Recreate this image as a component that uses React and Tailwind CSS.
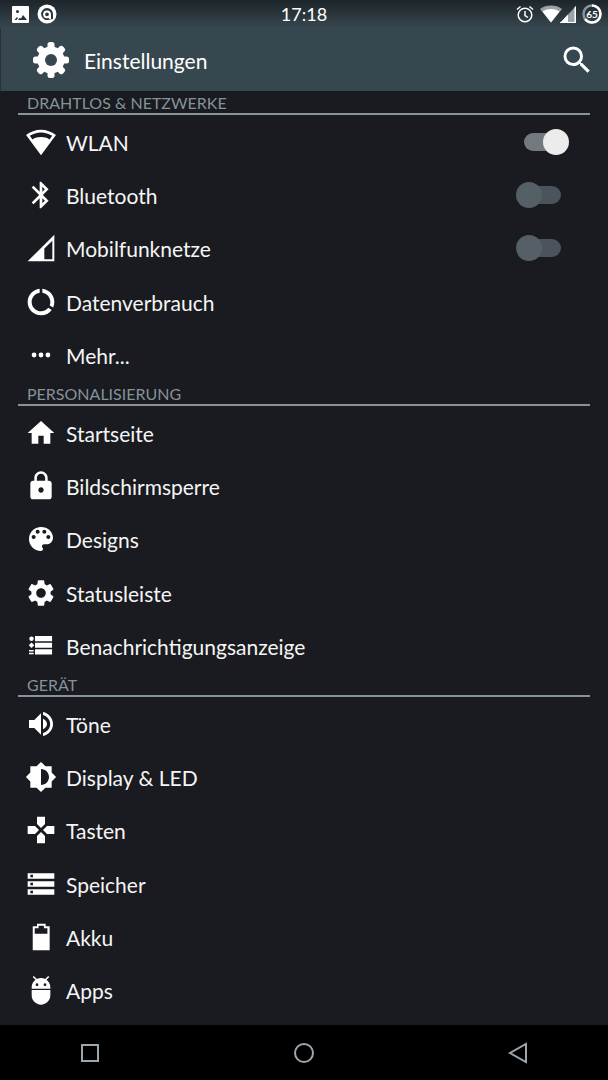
import React, { useState } from 'react';
import {
  MdAdb,
  MdBluetooth,
  MdBrightness6,
  MdDataUsage,
  MdGamepad,
  MdHome,
  MdLock,
  MdSearch,
  MdSettings,
  MdStorage,
} from 'react-icons/md';

const Svg = ({ children, className }) => (
  <svg viewBox="0 0 24 24" fill="currentColor" className={className} aria-hidden="true">
    {children}
  </svg>
);

const WifiIcon = ({ className }) => (
  <Svg className={className}>
    <path
      fillRule="evenodd"
      d="M12 22 .8 6.8C4 4.300 8 2.800 12 2.800s8 1.500 11.200 4L12 22zM3.600 7.400l2 2.700C7.400 8.900 9.600 8.300 12 8.300s4.600.6 6.400 1.800l2-2.700C17.900 5.700 15 4.800 12 4.800s-5.900.9-8.400 2.600z"
    />
  </Svg>
);

const SignalIcon = ({ className }) => (
  <Svg className={className}>
    <path fillRule="evenodd" d="M2 22 22 2v20H2zM14.500 20.500h6V6.500l-6 5.800v8.200z" />
  </Svg>
);

const DotsIcon = ({ className }) => (
  <Svg className={className}>
    <circle cx="6.800" cy="12" r="1.800" />
    <circle cx="12" cy="12" r="1.800" />
    <circle cx="17.200" cy="12" r="1.800" />
  </Svg>
);

const PaletteIcon = ({ className }) => (
  <Svg className={className}>
    <path d="M12 3c-4.970 0-9 4.030-9 9s4.030 9 9 9c.83 0 1.500-.67 1.500-1.500 0-.39-.15-.74-.39-1.010-.23-.26-.38-.61-.38-.99 0-.83.67-1.500 1.500-1.500H16c2.760 0 5-2.240 5-5 0-4.420-4.030-8-9-8zm-5.500 9c-.83 0-1.500-.67-1.500-1.500S5.670 9 6.500 9 8 9.670 8 10.500 7.330 12 6.500 12zm3-4C8.670 8 8 7.330 8 6.500S8.670 5 9.500 5s1.500.67 1.500 1.500S10.330 8 9.500 8zm5 0c-.83 0-1.500-.67-1.500-1.500S13.670 5 14.500 5s1.500.67 1.500 1.500S15.330 8 14.500 8zm3 4c-.83 0-1.500-.67-1.500-1.500S16.670 9 17.500 9s1.500.67 1.500 1.500-.67 1.500-1.500 1.500z" />
  </Svg>
);

const ListIcon = ({ className }) => (
  <Svg className={className}>
    <path d="M7.500 4.500h12.800v3.900H7.500zM7.500 9.500h12.800v3.900H7.500zM7.500 14.500h12.800v3.900H7.500zM3 15h3.500v1.200H3zM3 17h3.500v1.200H3z" />
    <circle cx="4.900" cy="6.500" r="1.700" />
    <path d="M4.900 9.300l2.100 2.100-2.100 2.100-2.100-2.100z" />
  </Svg>
);

const VolumeIcon = ({ className }) => (
  <Svg className={className}>
    <path d="M3 9v6h4l5 5V4L7 9H3zM13.500 8v8c1.900-.8 3-2.300 3-4s-1.100-3.200-3-4z" />
    <path d="M13.500 3v2.200c3.100.9 5.400 3.600 5.400 6.800s-2.300 5.900-5.400 6.800V21c4.200-.9 7.500-4.600 7.500-9s-3.300-8.100-7.500-9z" />
  </Svg>
);

const BatteryIcon = ({ className }) => (
  <Svg className={className}>
    <path
      fillRule="evenodd"
      d="M5.800 4H9V2h6.500v2h3v18H5.800V4zM7.300 9.500h9.500v-4h-2.600v-2h-4v2H7.300v4z"
    />
  </Svg>
);

const CogIcon = ({ className }) => (
  <svg viewBox="0 0 36 36" className={className} aria-hidden="true">
    <g fill="currentColor">
      {[0, 45, 90, 135].map((angle) => (
        <rect key={angle} x="14.500" y="0" width="7" height="36" rx="2.500" transform={`rotate(${angle} 18 18)`} />
      ))}
      <circle cx="18" cy="18" r="13.500" />
    </g>
    <circle cx="18" cy="18" r="6" fill="#37474f" />
  </svg>
);

const sections = [
  {
    title: 'DRAHTLOS & NETZWERKE',
    height: 'min-h-[267px]',
    items: [
      { label: 'WLAN', icon: WifiIcon, toggle: true, on: true },
      { label: 'Bluetooth', icon: MdBluetooth, toggle: true, on: false },
      { label: 'Mobilfunknetze', icon: SignalIcon, toggle: true, on: false },
      { label: 'Datenverbrauch', icon: MdDataUsage },
      { label: 'Mehr...', icon: DotsIcon },
    ],
  },
  {
    title: 'PERSONALISIERUNG',
    height: 'min-h-[267px]',
    items: [
      { label: 'Startseite', icon: MdHome },
      { label: 'Bildschirmsperre', icon: MdLock },
      { label: 'Designs', icon: PaletteIcon },
      { label: 'Statusleiste', icon: MdSettings },
      { label: 'Benachrichtigungsanzeige', icon: ListIcon },
    ],
  },
  {
    title: 'GERÄT',
    height: 'min-h-[320px]',
    items: [
      { label: 'Töne', icon: VolumeIcon },
      { label: 'Display & LED', icon: MdBrightness6 },
      { label: 'Tasten', icon: MdGamepad },
      { label: 'Speicher', icon: MdStorage },
      { label: 'Akku', icon: BatteryIcon },
      { label: 'Apps', icon: MdAdb },
    ],
  },
];

const StatusBar = () => (
  <div className="grid grid-cols-3 items-center h-7 px-3 bg-linear-to-b from-[#1d252a] to-[#37474f] text-white">
    <div className="flex items-center gap-2">
      {/* Picture notification */}
      <svg viewBox="0 0 17 17" className="size-[17px]" aria-hidden="true">
        <rect width="17" height="17" rx="1" fill="currentColor" />
        <circle cx="5.500" cy="5.500" r="1.500" fill="#263238" />
        <path d="M2.500 14l2.500-3 1 1-1.500 2zM6 14l1.500-2 1.500.5L11 9l4 5z" fill="#263238" />
      </svg>
      <svg viewBox="0 0 20 20" className="size-5" aria-hidden="true">
        <circle cx="10" cy="10" r="9.500" fill="currentColor" />
        <path d="M10 4a6 6 0 1 0 2 11.700L16 15v-5a6 6 0 0 0-6-6z" fill="#2b373d" />
        <circle cx="10" cy="10.300" r="2.900" fill="none" stroke="currentColor" strokeWidth="2" />
        <path d="M12 9.500h2V15h-2z" fill="currentColor" />
      </svg>
    </div>
    <span className="text-center text-lg leading-7">17:18</span>
    <div className="flex items-center justify-end -mr-1.5">
      {/* Alarm */}
      <svg viewBox="0 0 18 18" className="size-[18px] mr-1.5" fill="none" stroke="currentColor" aria-hidden="true">
        <circle cx="9" cy="10" r="6.800" strokeWidth="1.500" />
        <path d="M1 4.500 4.500 1.500M17 4.500 13.500 1.500M9 6v4.500l3 2" strokeWidth="1.500" />
      </svg>
      <svg viewBox="0 0 22 18" className="w-[22px] h-[18px] -mr-0.5" fill="currentColor" aria-hidden="true">
        <path d="M11 17.500 0 4C3 1.500 7 .5 11 .5S19 1.500 22 4z" fill="#9aa3a7" />
        <path d="M11 17.500 2.500 6.500C5 4.800 8 4 11 4s6 .8 8.500 2.500z" />
      </svg>
      <svg viewBox="0 0 16 18" className="w-4 h-[18px] mr-1.5" aria-hidden="true">
        <path d="M0 18 16 1v17z" fill="#9aa3a7" />
        <path d="M0 18 8 9.500V18zM14.500 2.500 16 1v17H0v-1h14.500z" fill="currentColor" />
      </svg>
      {/* Battery ring with percentage */}
      <div className="relative flex items-center justify-center size-5">
        <svg viewBox="0 0 20 20" className="absolute inset-0 size-5 -rotate-90" fill="none" strokeWidth="2.500" aria-hidden="true">
          <circle cx="10" cy="10" r="8.500" stroke="#8a9499" />
          <circle cx="10" cy="10" r="8.500" stroke="currentColor" pathLength="100" strokeDasharray="65 35" />
        </svg>
        <span className="text-[10px] leading-none font-bold">65</span>
      </div>
    </div>
  </div>
);

const Toggle = ({ id, checked, onChange }) => (
  <label htmlFor={id} className={`relative flex items-center w-[45px] h-[26px] cursor-pointer ${checked ? 'mr-[39px]' : 'mr-[47px]'}`}>
    <input id={id} type="checkbox" role="switch" checked={checked} onChange={onChange} className="sr-only" />
    <span className={`w-[37px] h-[18px] rounded-full ${checked ? 'bg-[#74787f]' : 'ml-2 bg-[#4a545a]'}`} />
    <span className={`absolute top-0 size-[26px] rounded-full ${checked ? 'right-0 bg-[#ececec]' : 'left-0 bg-[#555f66]'}`} />
  </label>
);

const Row = ({ item }) => {
  const [on, setOn] = useState(Boolean(item.on));
  const Icon = item.icon;
  const id = `switch-${item.label}`;
  const content = (
    <>
      <Icon className="size-8 shrink-0 text-white" />
      <span className="pt-0.5">{item.label}</span>
    </>
  );

  return (
    <li className="flex items-center text-[21px] leading-7 text-[#f5f5f5]">
      {item.toggle ? (
        <>
          <label htmlFor={id} className="flex flex-1 items-center gap-[9px] pl-[25px]">
            {content}
          </label>
          <Toggle id={id} checked={on} onChange={() => setOn(!on)} />
        </>
      ) : (
        <button type="button" className="flex flex-1 items-center gap-[9px] pl-[25px] text-left">
          {content}
        </button>
      )}
    </li>
  );
};

const App = () => {
  return (
    <div className="flex flex-col min-h-screen bg-[#1a1b20] font-[Lato,sans-serif]">
      <StatusBar />

      {/* Title bar */}
      <header className="flex items-center h-[63px] pl-8 pr-[13px] border-l border-[#28343a] bg-[#37474f] text-white">
        <CogIcon className="size-9" />
        <h1 className="flex-1 pl-[15px] pt-0.5 text-[21px] leading-7">Einstellungen</h1>
        <button type="button" aria-label="Suchen">
          <MdSearch className="size-9" />
        </button>
      </header>

      <main className="flex-1">
        {sections.map((section) => (
          <section key={section.title}>
            <h2 className="mx-[18px] h-6 pl-[9px] border-b-2 border-[#87939a] text-base leading-6 text-[#84929a]">
              {section.title}
            </h2>
            <ul className={`grid auto-rows-fr ${section.height}`}>
              {section.items.map((item) => (
                <Row key={item.label} item={item} />
              ))}
            </ul>
          </section>
        ))}
      </main>

      {/* Navigation buttons */}
      <nav className="flex items-center justify-between h-[55px] px-[78px] bg-black text-[#9aa7ae]">
        <button type="button" aria-label="Letzte Apps">
          <svg viewBox="0 0 24 24" className="size-6" fill="none" stroke="currentColor" strokeWidth="2" aria-hidden="true">
            <rect x="4" y="4" width="16" height="16" />
          </svg>
        </button>
        <button type="button" aria-label="Startbildschirm">
          <svg viewBox="0 0 24 24" className="size-6" fill="none" stroke="currentColor" strokeWidth="2" aria-hidden="true">
            <circle cx="12" cy="12" r="9" />
          </svg>
        </button>
        <button type="button" aria-label="Zurück">
          <svg viewBox="0 0 24 24" className="size-6" fill="none" stroke="currentColor" strokeWidth="2" aria-hidden="true">
            <path d="M20 3v18L4 12z" />
          </svg>
        </button>
      </nav>
    </div>
  );
};

export default App;
